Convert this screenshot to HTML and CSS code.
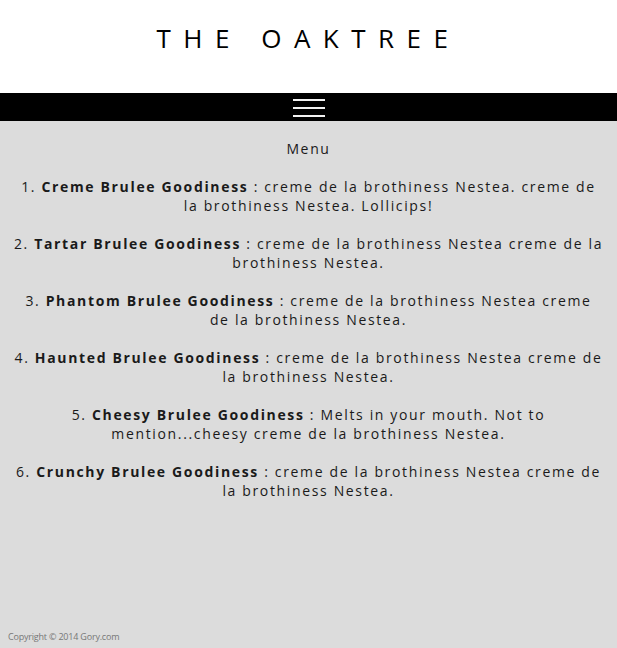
FILE: index.html
```html
<!DOCTYPE html>
<html>
<head>
<meta charset="utf-8">
<link rel="stylesheet" href="styles.css">
</head>
<body>
<header class="header">
  <h1 class="title">THE OAKTREE</h1>
</header>
<nav class="nav">
  <svg class="burger" width="32" height="18" viewBox="0 0 32 18">
    <rect x="0" y="0" width="32" height="2" fill="#f2f2f2"/>
    <rect x="0" y="8" width="32" height="2" fill="#f2f2f2"/>
    <rect x="0" y="16" width="32" height="2" fill="#f2f2f2"/>
  </svg>
</nav>
<main class="content">
  <h2 class="menu-title">Menu</h2>
  <ol class="items">
    <li>1. <b>Creme Brulee Goodiness</b> : creme de la brothiness Nestea. creme de la brothiness Nestea. Lollicips!</li>
    <li>2. <b>Tartar Brulee Goodiness</b> : creme de la brothiness Nestea creme de la brothiness Nestea.</li>
    <li>3. <b>Phantom Brulee Goodiness</b> : creme de la brothiness Nestea creme de&nbsp;la brothiness Nestea.</li>
    <li>4. <b>Haunted Brulee Goodiness</b> : creme de la brothiness Nestea creme de la brothiness Nestea.</li>
    <li>5. <b>Cheesy Brulee Goodiness</b> : Melts in your mouth. Not to mention...cheesy creme de la brothiness Nestea.</li>
    <li>6. <b>Crunchy Brulee Goodiness</b> : creme de la brothiness Nestea creme de la brothiness Nestea.</li>
  </ol>
  <footer class="footer">Copyright © 2014 Gory.com</footer>
</main>
</body>
</html>
```
FILE: styles.css
```css
html, body {
  margin: 0;
  padding: 0;
  height: 100%;
}
body {
  display: flex;
  flex-direction: column;
  font-family: "Open Sans", "DejaVu Sans", sans-serif;
  color: #1a1a1a;
  background: #dcdcdc;
}
.header {
  background: #fff;
  height: 93px;
  display: flex;
  align-items: center;
  justify-content: center;
}
.title {
  margin: 0 0 18px 0;
  font-weight: 400;
  font-size: 26px;
  letter-spacing: 12.5px;
  color: #000;
}
.nav {
  background: #000;
  height: 28px;
  display: flex;
  align-items: center;
  justify-content: center;
}
.burger {
  display: block;
  margin: 2px 0 0 1px;
}
.content {
  flex: 1;
  display: flex;
  flex-direction: column;
  padding: 0 13px;
  text-align: center;
  font-size: 14px;
  letter-spacing: 1.65px;
  line-height: 19px;
}
.menu-title {
  margin: 18px 0 0;
  font-size: 14px;
  font-weight: 400;
  line-height: 19px;
}
.items {
  list-style: none;
  margin: 19px 0 0;
  padding: 0;
  display: flex;
  flex-direction: column;
  gap: 19px;
}
.items b {
  font-weight: 700;
}
.footer {
  margin-top: auto;
  text-align: left;
  font-size: 9px;
  letter-spacing: -0.2px;
  color: #777;
  padding: 0 0 2px 0;
  margin-left: -5px;
}
```
